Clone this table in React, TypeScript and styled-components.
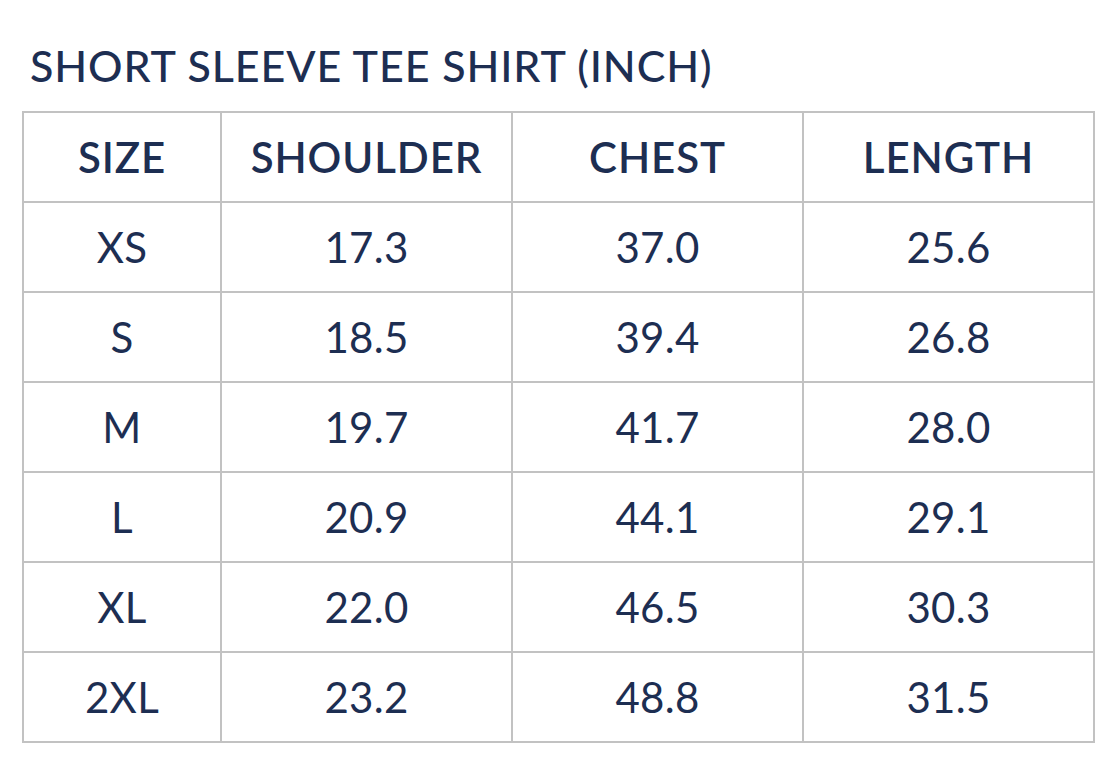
import React from "react";
import styled, { createGlobalStyle } from "styled-components";

const Global = createGlobalStyle`
  html, body { margin: 0; padding: 0; background: #ffffff; }
  body { font-family: Lato, "Open Sans", sans-serif; color: #1d2e52; }
`;

const Page = styled.div`
  padding: 42px 0 0 22px;
  width: 1072px;
`;

const Title = styled.h1`
  margin: 0 0 21px 8px;
  font-size: 43px;
  font-weight: 500;
  line-height: 48px;
  letter-spacing: 0.9px;
  color: #1d2e52;
  white-space: nowrap;
`;

const Table = styled.table`
  border-collapse: collapse;
  width: 1072px;
  table-layout: fixed;
`;

const Cell = styled.td<{ $head?: boolean }>`
  border: 2px solid #c2c2c2;
  height: 88px;
  padding: 0;
  text-align: center;
  vertical-align: middle;
  font-size: 42px;
  letter-spacing: ${(p) => (p.$head ? "0.9px" : "0.3px")};
  font-weight: ${(p) => (p.$head ? 600 : 400)};
  color: #1d2e52;
`;

const rows = [
  ["XS", "17.3", "37.0", "25.6"],
  ["S", "18.5", "39.4", "26.8"],
  ["M", "19.7", "41.7", "28.0"],
  ["L", "20.9", "44.1", "29.1"],
  ["XL", "22.0", "46.5", "30.3"],
  ["2XL", "23.2", "48.8", "31.5"],
];

export default function App() {
  return (
    <Page>
      <Global />
      <Title>SHORT SLEEVE TEE SHIRT (INCH)</Title>
      <Table>
        <colgroup>
          <col style={{ width: 198 }} />
          <col style={{ width: 291 }} />
          <col style={{ width: 291 }} />
          <col style={{ width: 291 }} />
        </colgroup>
        <tbody>
          <tr>
            <Cell $head>SIZE</Cell>
            <Cell $head>SHOULDER</Cell>
            <Cell $head>CHEST</Cell>
            <Cell $head>LENGTH</Cell>
          </tr>
          {rows.map((r) => (
            <tr key={r[0]}>
              {r.map((c, i) => (
                <Cell key={i}>{c}</Cell>
              ))}
            </tr>
          ))}
        </tbody>
      </Table>
    </Page>
  );
}
